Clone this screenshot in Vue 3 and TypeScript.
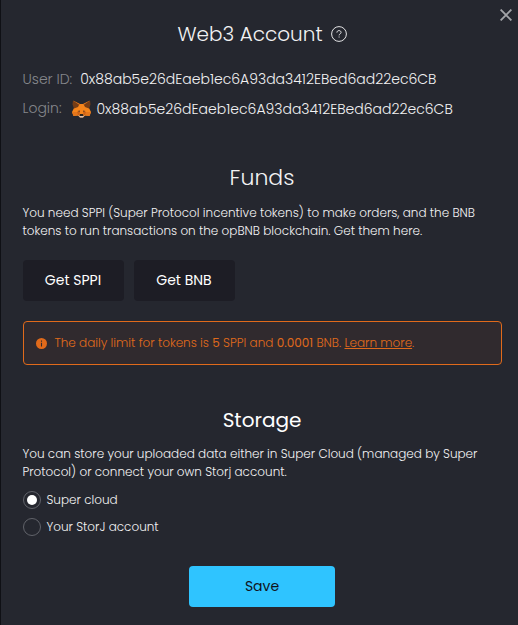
<script setup lang="ts">
import { ref } from 'vue'

type StorageId = 'super' | 'storj'

const address = '0x88ab5e26dEaeb1ec6A93da3412EBed6ad22ec6CB'
const storage = ref<StorageId>('super')
const options: { id: StorageId; label: string }[] = [
  { id: 'super', label: 'Super cloud' },
  { id: 'storj', label: 'Your StorJ account' },
]
</script>

<template>
  <main class="modal">
    <button class="close" aria-label="Close">
      <svg width="12" height="12" viewBox="0 0 12 12"><path d="M.6.6l10.8 10.8M11.4.6L.6 11.4" /></svg>
    </button>

    <header class="title">
      <h1>Web3 Account</h1>
      <svg class="help" width="16" height="16" viewBox="0 0 16 16">
        <circle cx="8" cy="8" r="7.4" />
        <path d="M5.9 6.6c0-1.2.9-2 2.1-2s2.1.8 2.1 1.9c0 1.3-2 1.4-2 2.9M8.1 10.5v1" />
      </svg>
    </header>

    <div class="row user">
      <span class="label">User ID:</span>
      <span class="address">{{ address }}</span>
    </div>
    <div class="row login">
      <span class="label">Login:</span>
      <svg class="fox" width="19" height="18" viewBox="0 0 38 36">
        <path fill="#f6851b" d="M3 2L15 8H23L35 2L34 16L38 24L35 32L26 31L22 35H16L12 31L3 32L0 24L4 16z" />
        <path fill="#763d16" d="M2 1L15 8L12 14L4 17L1 9zM36 1L23 8L26 14L34 17L37 9z" />
        <path fill="#e2761b" d="M2 1L16 8L15 10zM36 1L22 8L23 10z" />
        <path fill="#e4761b" d="M0 24H10L12 31L3 32zM38 24H28L26 31L35 32z" />
        <path fill="#cd6116" d="M10 24L16 22L15 30L12 31zM28 24L22 22L23 30L26 31z" />
        <path fill="#5c3a24" d="M11 22L16 21L15 24zM27 22L22 21L23 24z" />
        <path fill="#d7c1b3" d="M12 30L16 32H22L26 30L22 35H16z" />
        <path fill="#2b2420" d="M16 28H22L23 32H15z" />
      </svg>
      <span class="address">{{ address }}</span>
    </div>

    <h2 class="funds">Funds</h2>
    <p class="copy">
      You need SPPI (Super Protocol incentive tokens) to make orders, and the BNB<br />
      tokens to run transactions on the opBNB blockchain. Get them here.
    </p>
    <div class="actions">
      <button class="btn">Get SPPI</button>
      <button class="btn">Get BNB</button>
    </div>

    <div class="notice">
      <svg width="11" height="11" viewBox="0 0 11 11">
        <circle cx="5.5" cy="5.5" r="5.5" fill="#e06a1b" />
        <path d="M5.5 2.5v1.2M5.5 4.7v3.8" stroke="#302a2e" stroke-width="1.1" />
      </svg>
      <span>The daily limit for tokens is <b>5</b> SPPI and <b>0.0001</b> BNB. <a>Learn more</a>.</span>
    </div>

    <h2 class="storage">Storage</h2>
    <p class="copy">
      You can store your uploaded data either in Super Cloud (managed by Super<br />
      Protocol) or connect your own Storj account.
    </p>
    <div class="options">
      <label v-for="o in options" :key="o.id" class="option" @click="storage = o.id">
        <span class="radio" :class="{ on: storage === o.id }"></span>
        <span>{{ o.label }}</span>
      </label>
    </div>

    <button class="save">Save</button>
  </main>
</template>

<style>
body {
  background: #25272f;
}
</style>

<style scoped>
.modal {
  box-sizing: border-box;
  position: relative;
  width: 518px;
  height: 625px;
  padding: 21px 16.5px 0 21.5px;
  border-left: 1px solid #0f1015;
  background: #25272f;
  color: #f2f2f3;
  font-family: Poppins, Inter, sans-serif;
  font-weight: 300;
  font-size: 12px;
  overflow: hidden;
}
button {
  border: 0;
  padding: 0;
  font: inherit;
  color: inherit;
}
h1,
h2,
p {
  margin: 0;
  font-weight: 300;
}
.close {
  position: absolute;
  top: 9px;
  right: 6px;
  width: 12px;
  height: 12px;
  background: none;
}
.close svg {
  display: block;
  fill: none;
  stroke: #a3a4a8;
  stroke-width: 1.9;
}
.title {
  display: flex;
  justify-content: center;
  align-items: center;
  gap: 8px;
  height: 26px;
}
h1,
h2 {
  font-size: 20px;
  line-height: 26px;
  text-align: center;
  white-space: nowrap;
}
.help {
  fill: none;
  stroke: #e4e4e6;
  stroke-width: 1;
}
.row {
  display: flex;
  align-items: center;
  height: 20px;
  font-size: 14px;
  white-space: nowrap;
}
.user {
  margin-top: 22px;
  gap: 8px;
}
.login {
  margin-top: 10px;
}
.label {
  color: #86878c;
}
.login .label {
  margin-bottom: 2px;
}
.fox {
  margin: 0 6px 0 10px;
}
.funds {
  margin-top: 46px;
  font-size: 22px;
}
.copy {
  margin-top: 13px;
  line-height: 18px;
  white-space: nowrap;
}
.actions {
  display: flex;
  gap: 10px;
  margin-top: 20px;
}
.btn {
  width: 101px;
  height: 41px;
  border-radius: 4px;
  background: #1d1d25;
  color: #fff;
  font-size: 14px;
  font-weight: 400;
}
.notice {
  box-sizing: border-box;
  display: flex;
  align-items: center;
  gap: 8px;
  height: 44px;
  margin-top: 20px;
  padding-left: 12px;
  border: 1px solid #e06a1b;
  border-radius: 4px;
  background: #302a2e;
  color: #e06a1b;
  white-space: nowrap;
}
.notice b {
  font-weight: 400;
}
.notice a {
  text-decoration: underline;
}
.storage {
  margin-top: 42px;
  font-weight: 400;
  color: #fff;
}
.storage + .copy {
  margin-top: 12px;
}
.options {
  display: grid;
  gap: 9px;
  margin-top: 10px;
}
.option {
  display: flex;
  align-items: center;
  gap: 6px;
  height: 18px;
}
.radio {
  box-sizing: border-box;
  display: grid;
  place-items: center;
  width: 18px;
  height: 18px;
  border: 1px solid #61636a;
  border-radius: 50%;
}
.radio.on::after {
  content: '';
  width: 10px;
  height: 10px;
  border-radius: 50%;
  background: #fff;
}
.save {
  display: block;
  width: 146px;
  height: 41px;
  margin: 30px 0 0 166.5px;
  border-radius: 4px;
  background: #2fc4ff;
  color: #10131a;
  font-size: 14px;
  font-weight: 400;
}
</style>
